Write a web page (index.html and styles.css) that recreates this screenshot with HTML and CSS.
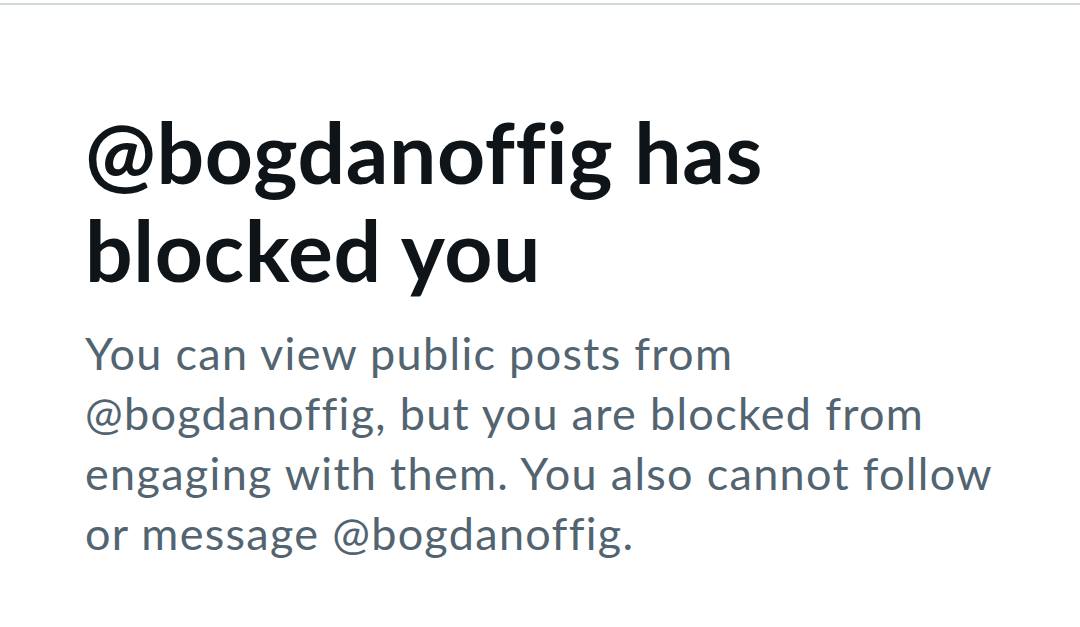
FILE: index.html
```html
<!DOCTYPE html>
<html lang="en">
<head>
  <meta charset="UTF-8">
  <title>Blocked</title>
  <link rel="stylesheet" href="styles.css">
</head>
<body>
  <div class="topbar"></div>

  <div class="notice">
    <h1 class="notice-title">@bogdanoffig has blocked you</h1>
    <p class="notice-text">You can view public posts from @bogdanoffig, but you are blocked from engaging with them. You also cannot follow or message @bogdanoffig.</p>
  </div>
</body>
</html>
```

FILE: styles.css
```css
* {
  margin: 0;
  padding: 0;
  box-sizing: border-box;
}

body {
  font-family: Lato, "Noto Sans", sans-serif;
  font-variant-ligatures: none;
  background-color: #fff;
  color: #0f1419;
  padding-top: 3px;
}

.topbar {
  height: 2px;
  background-color: #cfd9de;
}

.notice {
  padding: 98px 40px 0 85px;
}

.notice-title {
  font-size: 84px;
  font-weight: 700;
  line-height: 98px;
  letter-spacing: 0.6px;
  color: #0f1419;
  max-width: 900px;
}

.notice-text {
  margin-top: 24px;
  font-size: 45px;
  line-height: 60px;
  letter-spacing: 1.3px;
  color: #536471;
  max-width: 940px;
}
```
